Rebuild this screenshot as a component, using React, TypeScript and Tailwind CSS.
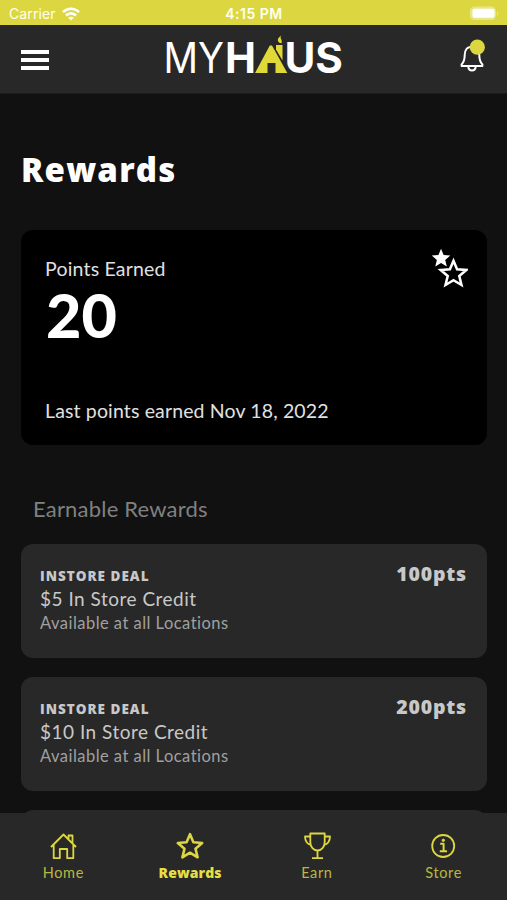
type Reward = { kind: string; title: string; note: string; points: string }

const REWARDS: Reward[] = [
  { kind: 'INSTORE DEAL', title: '$5 In Store Credit', note: 'Available at all Locations', points: '100pts' },
  { kind: 'INSTORE DEAL', title: '$10 In Store Credit', note: 'Available at all Locations', points: '200pts' },
]

const STAR = 'M14 2.2 L17.4 10.3 L26.2 11 L19.5 16.7 L21.6 25.3 L14 20.7 L6.4 25.3 L8.5 16.7 L1.8 11 L10.6 10.3 Z'

function StatusBar() {
  return (
    <div className="grid h-[25px] shrink-0 grid-cols-3 items-center bg-[#dcd740] px-2 font-['Inter',sans-serif] text-sm text-[#fffff0]">
      <div className="flex items-center gap-1.5 pt-0.5 pl-px">
        <span className="tracking-[0.1px]">Carrier</span>
        <svg width="18" height="14" viewBox="0 0 18 14" fill="none" stroke="#fff" strokeWidth="2.6">
          <path d="M1 5.2 C5.5 0.6 12.5 0.6 17 5.2" />
          <path d="M4 8.5 C6.8 5.6 11.2 5.6 14 8.5" />
          <path d="M9 13.6 L6.2 10.8 C7.8 9.3 10.2 9.3 11.8 10.8 Z" fill="#fff" stroke="none" />
        </svg>
      </div>
      <span className="pt-[3px] pl-px text-center text-sm font-semibold tracking-[0.5px]">4:15 PM</span>
      <svg className="mt-0.5 justify-self-end" width="30" height="15" viewBox="0 0 30 15">
        <rect x="1" y="0.5" width="26" height="13.5" rx="4.5" fill="#e9e68a" />
        <path d="M28 5 C29.6 6 29.6 9 28 10 Z" fill="#e9e68a" />
        <rect x="3.5" y="2.8" width="22" height="9" rx="2" fill="#fff" />
      </svg>
    </div>
  )
}

function Logo() {
  return (
    <svg width="180" height="56" viewBox="0 -5 180 56" fill="#fff" fontFamily="Inter, sans-serif" fontSize="42">
      <text x="-0.5" y="39" fontWeight="400" textLength="60.5" lengthAdjust="spacingAndGlyphs">MY</text>
      <text x="61" y="39" fontWeight="700" textLength="31" lengthAdjust="spacingAndGlyphs">H</text>
      <text x="120.5" y="39" fontWeight="700" textLength="58.5" lengthAdjust="spacingAndGlyphs">US</text>
      {/* House standing in for the letter A */}
      <g fill="#e0d838">
        <path d="M91 39 L105.8 11.5 H108 L123.3 39 H111.5 V29 H103.5 V39 Z" />
        <path d="M112 11 H118.5 V26.5 L112 15.5 Z" />
        <path d="M117.5 1.5 C114.8 4 119 5.5 117.5 9.2 C113.6 9.2 111.8 4.5 117.5 1.5 Z" />
      </g>
    </svg>
  )
}

function Header() {
  return (
    <header className="flex h-[69px] shrink-0 items-start justify-between border-b border-[#1b1b1b] bg-[#282828] pr-[21px] pl-[21px]">
      <div className="mt-[25px] flex w-7 flex-col gap-1">
        <span className="h-1 bg-white" />
        <span className="h-1 bg-white" />
        <span className="h-1 bg-white" />
      </div>
      <div className="mt-1">
        <Logo />
      </div>
      <svg className="mt-3 overflow-visible" width="28" height="36" viewBox="-1 0 28 36" fill="none" stroke="#fff" strokeWidth="2" strokeLinejoin="round">
        <path d="M13 9.7 C8 9.7 5.7 13.5 5.7 18 C5.7 22.5 5 25 2.6 27.5 V29 H23.4 V27.5 C21 25 20.3 22.5 20.3 18 C20.3 13.5 18 9.7 13 9.7 Z" />
        <path d="M9.3 29.4 C9.6 34.9 16.4 34.9 16.7 29.4" />
        <circle cx="18.3" cy="10.2" r="7.6" fill="#dcd740" stroke="none" />
      </svg>
    </header>
  )
}

function PointsCard() {
  return (
    <section className="mt-10 flex h-[215px] shrink-0 justify-between rounded-xl bg-black pr-[19px] pl-6">
      <div className="pt-[27px] text-[#e0e0e0]">
        <p className="text-[19.5px] leading-6 tracking-[0.2px]">Points Earned</p>
        <p className="mt-1 pl-px text-[61px] leading-[60px] font-black text-white">20</p>
        <p className="mt-[54px] text-[19.5px] leading-6 tracking-[0.14px]">Last points earned Nov 18, 2022</p>
      </div>
      <svg className="mt-[18px]" width="38" height="42" viewBox="0 0 38 42">
        <path d={STAR} fill="#fff" transform="translate(0.4 -0.8) scale(0.76)" />
        <path d={STAR} fill="#000" stroke="#fff" strokeWidth="2.4" transform="translate(8.8 10.4) scale(1.05)" />
      </svg>
    </section>
  )
}

function RewardCard({ reward }: { reward: Reward }) {
  return (
    <li className="flex h-[114.5px] shrink-0 justify-between rounded-xl bg-[#282828] pr-5 pl-[19px]">
      <div className="pt-[23px]">
        <p className="font-['Open_Sans',sans-serif] text-[13.5px] leading-[18px] font-extrabold tracking-[1px] text-[#c8c8c8]">
          {reward.kind}
        </p>
        <p className="mt-0.5 text-[19px] leading-6 tracking-[0.5px] text-[#c8c8c8]">{reward.title}</p>
        <p className="mt-px text-[16.5px] leading-[22px] tracking-[0.47px] text-[#a0a0a0]">{reward.note}</p>
      </div>
      <p className="mt-[18px] font-['Open_Sans',sans-serif] text-[19.5px] leading-6 font-extrabold tracking-[0.8px] text-[#c8c8c8]">
        {reward.points}
      </p>
    </li>
  )
}

const TABS = [
  {
    label: 'Home',
    icon: (
      <path d="M2 15 L14.5 2.5 L27 15 M19.5 7.5 V3.5 H23.5 V11.5 M4.7 12.8 V26.2 H10.8 V17 H18.2 V26.2 H24.3 V12.8" />
    ),
  },
  { label: 'Rewards', active: true, icon: <path d={STAR} strokeWidth="2.6" /> },
  {
    label: 'Earn',
    icon: (
      <>
        <path d="M7.3 1.5 H21.7 V10 C21.7 15 18.5 18.5 14.5 18.5 C10.5 18.5 7.3 15 7.3 10 Z" />
        <path d="M7.3 4.5 H2 C2 9 4.5 12.5 7.8 12.5 M21.7 4.5 H27 C27 9 24.5 12.5 21.2 12.5 M14.5 18.5 V26.2 M9 26.2 H20" />
      </>
    ),
  },
  {
    label: 'Store',
    icon: (
      <>
        <circle cx="13.2" cy="14" r="11" />
        <path d="M10.2 11.8 H13.6 V19 M9.8 19.3 H17" strokeWidth="2" />
        <circle cx="13.3" cy="8.3" r="1.2" fill="#dcd740" strokeWidth="1" />
      </>
    ),
  },
]

function TabBar() {
  return (
    <nav className="grid h-[87px] shrink-0 grid-cols-4 bg-[#282828] pt-[19px]">
      {TABS.map((tab) => (
        <div key={tab.label} className="flex flex-col items-center">
          <svg width="28" height="28" viewBox="0 0 28 28" fill="none" stroke="#dcd740" strokeWidth="1.8" strokeLinejoin="round" className="overflow-visible">
            {tab.icon}
          </svg>
          <span
            className={
              tab.active
                ? "mt-1 font-['Open_Sans',sans-serif] text-sm leading-[18px] font-extrabold tracking-[0.1px] text-[#e4df45]"
                : 'mt-1 text-[14.5px] leading-[18px] tracking-[0.6px] text-[#b8b940]'
            }
          >
            {tab.label}
          </span>
        </div>
      ))}
    </nav>
  )
}

export default function App() {
  return (
    <div className="flex h-[900px] w-[507px] flex-col overflow-hidden bg-[#111] font-['Lato',sans-serif]">
      <StatusBar />
      <Header />
      <main className="flex min-h-0 flex-1 flex-col overflow-hidden pr-5 pl-[21px]">
        <h1 className="mt-14 shrink-0 font-['Open_Sans',sans-serif] text-[33px] leading-10 font-extrabold tracking-[1.2px] text-white">
          Rewards
        </h1>
        <PointsCard />
        <h2 className="mt-[50px] shrink-0 pl-3 text-[22px] leading-7 tracking-[0.2px] text-[#808080]">Earnable Rewards</h2>
        <ul className="mt-[20.5px] flex flex-col gap-[18.5px]">
          {REWARDS.map((reward) => (
            <RewardCard key={reward.points} reward={reward} />
          ))}
          {/* Next card peeking out above the tab bar */}
          <li className="h-[114.5px] shrink-0 rounded-xl bg-[#282828]" />
        </ul>
      </main>
      <TabBar />
    </div>
  )
}
